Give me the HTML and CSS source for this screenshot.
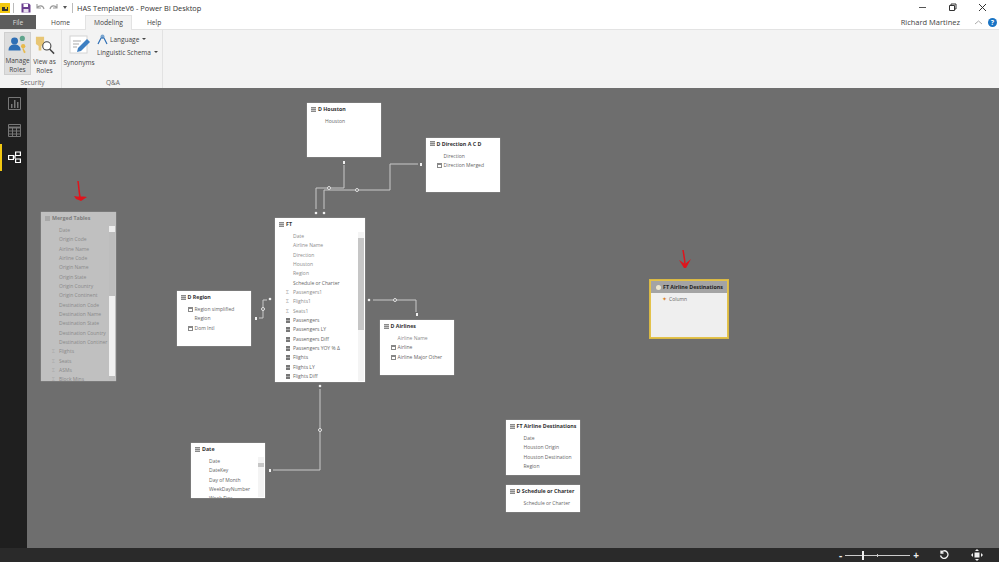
FILE: index.html
```html
<!DOCTYPE html>
<html lang="en">
<head>
    <meta charset="UTF-8">
    <title>HAS TemplateV6 - Power BI Desktop</title>
    <link rel="stylesheet" href="styles.css">
</head>
<body>
<div class="app">
    <div class="title-bar">
        <svg class="app-logo" viewBox="0 0 10 10"><rect width="10" height="10" fill="#f2c811"/><rect x="2" y="4" width="6" height="4" fill="#333"/><rect x="5" y="3" width="2" height="3" fill="#f2c811"/></svg>
        <span class="qa-sep"></span>
        <svg class="qa-icon qa-save" viewBox="0 0 10 10"><path d="M.5.5h7.500l1.500 1.500v7.500h-9z" fill="#6a3d8f"/><rect x="2.500" y="1" width="4.500" height="3" fill="#fff"/><rect x="2.500" y="6" width="5" height="3.500" fill="#e8e0ee"/></svg>
        <svg class="qa-icon" viewBox="0 0 10 10"><path d="M2 1v4h4M2 5c2-3 6-3 7 1" fill="none" stroke="#9a9a9a" stroke-width="1.100"/></svg>
        <svg class="qa-icon" viewBox="0 0 10 10"><path d="M8 1v4h-4M8 5c-2-3-6-3-7 1" fill="none" stroke="#9a9a9a" stroke-width="1.100"/></svg>
        <span class="qa-drop"></span>
        <span class="qa-sep"></span>
        <span class="window-title">HAS TemplateV6 - Power BI Desktop</span>
        <div class="window-controls">
            <svg viewBox="0 0 9 9"><path d="M1 4.500h7" stroke="#555" fill="none"/></svg>
            <svg viewBox="0 0 9 9"><path d="M1.500 2.500h5v5h-5zM3 2.500v-1.500h5v5h-1.500" stroke="#333" fill="none"/></svg>
            <svg viewBox="0 0 9 9"><path d="M1 1l7 7M8 1l-7 7" stroke="#333" fill="none"/></svg>
        </div>
    </div>

    <div class="tab-bar">
        <div class="tab tab-file">File</div>
        <div class="tab">Home</div>
        <div class="tab tab-active">Modeling</div>
        <div class="tab">Help</div>
        <div class="user-area">
            <span class="user-name">Richard Martinez</span>
            <svg class="collapse" viewBox="0 0 9 5"><path d="M1 4l3.500-3 3.500 3" stroke="#aaa" fill="none"/></svg>
            <span class="help-dot">?</span>
        </div>
    </div>

    <div class="ribbon">
        <div class="ribbon-group group-security">
            <div class="group-items">
                <div class="big-btn btn-selected">
                    <svg viewBox="0 0 24 22"><circle cx="8" cy="7" r="4" fill="#2f6fb5"/><path d="M1 18c0-5 3-7 7-7s7 2 7 7z" fill="#2f6fb5"/><circle cx="17" cy="4" r="3" fill="#5fa48c"/><circle cx="18" cy="13" r="2.500" fill="#e8b94a"/><path d="M18 15l3 5-2 1-2-5z" fill="#e8b94a"/></svg>
                    <span>Manage<br>Roles</span>
                </div>
                <div class="big-btn">
                    <svg viewBox="0 0 24 22"><path d="M2 2h9v8l-3 2v5h-3v-5l-3-2z" fill="#e8c675"/><circle cx="14" cy="12" r="4.500" fill="#fff" stroke="#444" stroke-width="1.200"/><path d="M17 15.500l5 5" stroke="#444" stroke-width="1.600"/></svg>
                    <span>View as<br>Roles</span>
                </div>
            </div>
            <div class="group-label">Security</div>
        </div>
        <div class="ribbon-group group-qa">
            <div class="group-items">
                <div class="big-btn btn-synonyms">
                    <svg viewBox="0 0 24 22"><rect x="3" y="2" width="17" height="17" fill="#fff" stroke="#d4d4d4"/><path d="M6 7h8M6 10h6M6 13h4" stroke="#a9a9a9"/><path d="M10 18l1-4 9-9 3 3-9 9z" fill="#3d7fc2"/></svg>
                    <span>Synonyms</span>
                </div>
                <div class="small-btns">
                    <div class="small-btn">
                        <svg viewBox="0 0 11 11"><circle cx="5.500" cy="2.500" r="2" fill="#7aa5cf"/><path d="M1 10l3-6h3l3 6" fill="none" stroke="#2f6fb5" stroke-width="1.200"/></svg>
                        <span>Language</span><i class="caret"></i>
                    </div>
                    <div class="small-btn">
                        <span>Linguistic Schema</span><i class="caret"></i>
                    </div>
                </div>
            </div>
            <div class="group-label">Q&amp;A</div>
        </div>
    </div>

    <div class="workspace">
        <div class="side-nav">
            <div class="nav-item">
                <svg viewBox="0 0 13 13"><path d="M.5.500h12v12h-12z" fill="none" stroke="#777"/><path d="M3 11V7h1.500v4zM6 11V3h1.500v8zM9 11V5h1.500v6z" fill="#777"/></svg>
            </div>
            <div class="nav-item">
                <svg viewBox="0 0 13 13"><path d="M.5.500h12v12h-12z" fill="none" stroke="#777"/><path d="M.5 3.500h12" stroke="#777" stroke-width="2"/><path d="M.5 7h12M.5 10h12M4.500 3v10M8.500 3v10" stroke="#777"/></svg>
            </div>
            <div class="nav-item nav-active">
                <svg viewBox="0 0 13 13"><g fill="#1f1f1f" stroke="#fff" stroke-width="1.200"><path d="M.6 4.500h4.800v4h-4.800z"/><path d="M7.600 1h4.800v3.500h-4.800z"/><path d="M7.600 8h4.800v3.500h-4.800z"/></g><path d="M5.500 6h2M7 4v4" stroke="#fff"/></svg>
            </div>
        </div>

        <div class="canvas">
            <svg class="links" viewBox="27 88 972 460">
                <g fill="none" stroke="#c8c8c8" stroke-width="1">
                    <path d="M344 165V188H316V209"/>
                    <path d="M418 164H390V190H324V209"/>
                    <path d="M259 318H263V300H267"/>
                    <path d="M373 300H416V312"/>
                    <path d="M320 389V470H273"/>
                </g>
                <g fill="#6e6e6e" stroke="#e4e4e4" stroke-width="1">
                    <circle cx="329" cy="188" r="1.500"/>
                    <circle cx="357" cy="190" r="1.500"/>
                    <circle cx="263" cy="309" r="1.500"/>
                    <circle cx="395" cy="300" r="1.500"/>
                    <circle cx="320" cy="430" r="1.500"/>
                </g>
                <g fill="#f0f0f0">
                    <rect x="343" y="161" width="2" height="3"/>
                    <rect x="420" y="163" width="2" height="3"/>
                    <rect x="255" y="317" width="2" height="3"/>
                    <rect x="416" y="313" width="2" height="3"/>
                    <rect x="269" y="469" width="2" height="3"/>
                    <circle cx="316" cy="213" r="1.300"/>
                    <circle cx="324" cy="213" r="1.300"/>
                    <circle cx="270" cy="299" r="1.300"/>
                    <circle cx="369" cy="300" r="1.300"/>
                    <circle cx="320" cy="386" r="1.300"/>
                </g>
                <g fill="none" stroke="#e0141c" stroke-width="1.500">
                    <path d="M78 181C79 188 79 192 80 197"/>
                    <path d="M683 250C684 256 685 260 685 266"/>
                </g>
                <g fill="#e0141c">
                    <path d="M74 196C78 197 83 196 87 197L81 201 76 199z"/>
                    <path d="M679 260L685 264 691 259 686 268H684z"/>
                </g>
            </svg>

            <div class="table t-houston">
                <div class="table-head"><i class="ic-table"></i>D Houston</div>
                <div class="row">Houston</div>
            </div>

            <div class="table t-direction">
                <div class="table-head"><i class="ic-table"></i>D Direction A C D</div>
                <div class="row">Direction</div>
                <div class="row"><i class="ic-calc"></i>Direction Merged</div>
            </div>

            <div class="table t-ft">
                <div class="table-head"><i class="ic-table"></i>FT</div>
                <div class="table-rows">
                    <div class="row dim">Date</div>
                    <div class="row dim">Airline Name</div>
                    <div class="row dim">Direction</div>
                    <div class="row dim">Houston</div>
                    <div class="row dim">Region</div>
                    <div class="row">Schedule or Charter</div>
                    <div class="row dim"><i class="ic-sum">Σ</i>Passengers1</div>
                    <div class="row dim"><i class="ic-sum">Σ</i>Flights1</div>
                    <div class="row dim"><i class="ic-sum">Σ</i>Seats1</div>
                    <div class="row"><i class="ic-measure"></i>Passengers</div>
                    <div class="row"><i class="ic-measure"></i>Passengers LY</div>
                    <div class="row"><i class="ic-measure"></i>Passengers Diff</div>
                    <div class="row"><i class="ic-measure"></i>Passengers YOY % Δ</div>
                    <div class="row"><i class="ic-measure"></i>Flights</div>
                    <div class="row"><i class="ic-measure"></i>Flights LY</div>
                    <div class="row"><i class="ic-measure"></i>Flights Diff</div>
                </div>
                <div class="scroll scroll-ft"><b></b></div>
            </div>

            <div class="table t-region">
                <div class="table-head"><i class="ic-table"></i>D Region</div>
                <div class="row"><i class="ic-calc"></i>Region simplified</div>
                <div class="row">Region</div>
                <div class="row"><i class="ic-calc"></i>Dom Intl</div>
            </div>

            <div class="table t-airlines">
                <div class="table-head"><i class="ic-table"></i>D Airlines</div>
                <div class="row dim">Airline Name</div>
                <div class="row"><i class="ic-calc"></i>Airline</div>
                <div class="row"><i class="ic-calc"></i>Airline Major Other</div>
            </div>

            <div class="table t-date">
                <div class="table-head"><i class="ic-table"></i>Date</div>
                <div class="table-rows">
                    <div class="row">Date</div>
                    <div class="row">DateKey</div>
                    <div class="row">Day of Month</div>
                    <div class="row">WeekDayNumber</div>
                    <div class="row">Week Day</div>
                </div>
                <div class="scroll scroll-date"><b></b></div>
            </div>

            <div class="table t-dest">
                <div class="table-head"><i class="ic-table"></i>FT Airline Destinations</div>
                <div class="row">Date</div>
                <div class="row">Houston Origin</div>
                <div class="row">Houston Destination</div>
                <div class="row">Region</div>
            </div>

            <div class="table t-schedule">
                <div class="table-head"><i class="ic-table"></i>D Schedule or Charter</div>
                <div class="row">Schedule or Charter</div>
            </div>

            <div class="table t-merged">
                <div class="table-head"><i class="ic-table"></i>Merged Tables</div>
                <div class="table-rows">
                    <div class="row">Date</div>
                    <div class="row">Origin Code</div>
                    <div class="row">Airline Name</div>
                    <div class="row">Airline Code</div>
                    <div class="row">Origin Name</div>
                    <div class="row">Origin State</div>
                    <div class="row">Origin Country</div>
                    <div class="row">Origin Continent</div>
                    <div class="row">Destination Code</div>
                    <div class="row">Destination Name</div>
                    <div class="row">Destination State</div>
                    <div class="row">Destination Country</div>
                    <div class="row">Destination Continer</div>
                    <div class="row"><i class="ic-sum">Σ</i>Flights</div>
                    <div class="row"><i class="ic-sum">Σ</i>Seats</div>
                    <div class="row"><i class="ic-sum">Σ</i>ASMs</div>
                    <div class="row"><i class="ic-sum">Σ</i>Block Mins</div>
                </div>
                <div class="scroll scroll-merged"><b></b></div>
            </div>

            <div class="table t-new">
                <div class="table-head"><i class="ic-new"></i>FT Airline Destinations</div>
                <div class="row"><i class="ic-star">✦</i>Column</div>
            </div>
        </div>
    </div>

    <div class="status-bar">
        <div class="zoom-control">
            <span class="zoom-sign">-</span>
            <div class="zoom-track"><b></b><i></i></div>
            <span class="zoom-sign">+</span>
        </div>
        <svg class="status-icon" viewBox="0 0 10 10"><path d="M2 2.500a3.800 3.800 0 1 1-.5 3M2 .5v2.500h2.500" fill="none" stroke="#f2f2f2" stroke-width="1.300"/></svg>
        <svg class="status-icon fit" viewBox="0 0 12 12"><path d="M6 0l2 2H4zM6 12l2-2H4zM0 6l2-2v4zM12 6l-2-2v4z" fill="#f2f2f2"/><rect x="3.500" y="3.500" width="5" height="5" fill="#f2f2f2"/></svg>
    </div>
</div>
</body>
</html>
```

FILE: styles.css
```css
* {
    margin: 0;
    padding: 0;
    box-sizing: border-box;
}

body {
    font-family: 'Open Sans', 'Liberation Sans', sans-serif;
    background: #6e6e6e;
    overflow: hidden;
}

.app {
    width: 999px;
    height: 562px;
    display: flex;
    flex-direction: column;
}

/* title bar */
.title-bar {
    height: 15px;
    background: #fff;
    display: flex;
    align-items: center;
    flex-shrink: 0;
}

.app-logo {
    width: 10px;
    height: 10px;
}

.qa-sep {
    width: 1px;
    height: 10px;
    background: #bbb;
    margin: 0 4px 0 3px;
}

.qa-icon {
    width: 10px;
    height: 10px;
    margin: 0 2px;
}

.qa-save {
    margin-left: 3px;
}

.qa-drop {
    width: 0;
    height: 0;
    border-left: 2px solid transparent;
    border-right: 2px solid transparent;
    border-top: 3px solid #555;
    margin: 0 2px;
}

.window-title {
    font-size: 7.400px;
    color: #333;
    white-space: nowrap;
}

.window-controls {
    margin-left: auto;
    display: flex;
    gap: 21px;
    padding-right: 12px;
}

.window-controls svg {
    width: 9px;
    height: 9px;
}

/* tabs */
.tab-bar {
    height: 15px;
    background: #fff;
    display: flex;
    align-items: stretch;
    border-bottom: 1px solid #e3e3e3;
    flex-shrink: 0;
}

.tab {
    font-size: 6.700px;
    color: #444;
    padding: 0 15px;
    line-height: 15px;
    white-space: nowrap;
}

.tab-file {
    width: 36px;
    background: #5c5c5c;
    color: #ddd;
    padding: 0;
    text-align: center;
}

.tab-active {
    background: #f3f3f3;
    border: 1px solid #e3e3e3;
    border-bottom: none;
    height: 15px;
    line-height: 14px;
    width: 47px;
    padding: 0;
    text-align: center;
}

.user-area {
    margin-left: auto;
    display: flex;
    align-items: center;
    padding-right: 2px;
}

.user-name {
    font-size: 7.500px;
    color: #444;
    margin-right: 14px;
}

.collapse {
    width: 9px;
    height: 5px;
    margin-right: 5px;
}

.help-dot {
    width: 9px;
    height: 9px;
    border-radius: 50%;
    background: #1a74c4;
    color: #fff;
    font-size: 7px;
    font-weight: 700;
    line-height: 9px;
    text-align: center;
}

/* ribbon */
.ribbon {
    height: 58px;
    background: #f3f3f3;
    display: flex;
    flex-shrink: 0;
}

.ribbon-group {
    display: flex;
    flex-direction: column;
    border-right: 1px solid #e2e2e2;
}

.group-security {
    width: 62px;
    padding-left: 4px;
}

.group-qa {
    width: 101px;
    padding-left: 2px;
}

.group-items {
    height: 49px;
    padding-top: 2px;
    display: flex;
}

.group-label {
    font-size: 6.500px;
    color: #666;
    text-align: center;
    line-height: 8px;
}

.big-btn {
    width: 27px;
    height: 43px;
    display: flex;
    flex-direction: column;
    align-items: center;
    font-size: 6.500px;
    line-height: 9px;
    color: #444;
    text-align: center;
    padding-top: 3px;
}

.big-btn svg {
    width: 24px;
    height: 22px;
    margin-bottom: 2px;
}

.btn-selected {
    background: #dedede;
    border: 1px solid #cfcfcf;
    padding-top: 2px;
}

.btn-synonyms {
    width: 30px;
    margin-right: 3px;
    padding-top: 2px;
}

.small-btns {
    display: flex;
    flex-direction: column;
    gap: 3px;
    padding-top: 2px;
}

.small-btn {
    display: flex;
    align-items: center;
    font-size: 6.500px;
    color: #444;
    height: 10px;
    white-space: nowrap;
}

.small-btn svg {
    width: 11px;
    height: 11px;
    margin-right: 2px;
}

.caret {
    width: 0;
    height: 0;
    border-left: 2px solid transparent;
    border-right: 2px solid transparent;
    border-top: 2px solid #444;
    margin-left: 3px;
}

/* main area */
.workspace {
    flex: 1;
    display: flex;
    min-height: 0;
}

.side-nav {
    width: 27px;
    background: #1f1f1f;
    padding-top: 2px;
    display: flex;
    flex-direction: column;
    flex-shrink: 0;
}

.nav-item {
    height: 27px;
    display: flex;
    align-items: center;
    justify-content: center;
    border-left: 2px solid transparent;
}

.nav-item svg {
    width: 13px;
    height: 13px;
}

.nav-active {
    border-left-color: #f2c811;
}

.canvas {
    flex: 1;
    position: relative;
    background: #6e6e6e;
    overflow: hidden;
}

.links {
    position: absolute;
    left: 0;
    top: 0;
    width: 972px;
    height: 460px;
}

/* diagram tables */
.table {
    position: absolute;
    background: #fff;
    box-shadow: 0 0 1px rgba(255,255,255,0.5);
    overflow: hidden;
    font-size: 5px;
    color: #666;
}

.table-head {
    height: 12px;
    margin-bottom: 2px;
    display: flex;
    align-items: center;
    padding-left: 4px;
    font-size: 5.300px;
    font-weight: 700;
    color: #333;
    white-space: nowrap;
}

.ic-table {
    width: 5px;
    height: 5px;
    background: repeating-linear-gradient(#8a8a8a 0 1px, #c4c4c4 1px 2px);
    margin-right: 2px;
    flex-shrink: 0;
}

.row {
    height: 9.330px;
    line-height: 9.330px;
    padding-left: 18px;
    position: relative;
    white-space: nowrap;
}

.dim {
    color: #8c8c8c;
}

.ic-calc,
.ic-measure,
.ic-sum {
    position: absolute;
    left: 11px;
    top: 2px;
    width: 5px;
    height: 5px;
    font-style: normal;
}

.ic-calc {
    border: 1px solid #888;
    background: linear-gradient(#888 0 1px, #fff 1px);
}

.ic-measure {
    background: repeating-linear-gradient(#777 0 2px, #aaa 2px 3px);
    width: 4px;
}

.ic-sum {
    top: 0;
    color: #aaa;
    font-size: 5px;
}

.table-rows {
    overflow: hidden;
}

.scroll {
    position: absolute;
    right: 1px;
    width: 6px;
    background: #f4f4f4;
}

.scroll b {
    display: block;
    background: #c6c6c6;
}

.t-houston {
    left: 280px;
    top: 15px;
    width: 74px;
    height: 54px;
}

.t-direction {
    left: 398.500px;
    top: 49.500px;
    width: 74.500px;
    height: 54.500px;
}

.t-ft {
    left: 248px;
    top: 130px;
    width: 90px;
    height: 164px;
}

.scroll-ft {
    top: 14px;
    bottom: 1px;
}

.scroll-ft b {
    height: 92px;
    margin-top: 6px;
}

.t-region {
    left: 149.500px;
    top: 203px;
    width: 74.500px;
    height: 55px;
}

.t-airlines {
    left: 352.500px;
    top: 232px;
    width: 74.500px;
    height: 55px;
}

.t-date {
    left: 164px;
    top: 355px;
    width: 74px;
    height: 55px;
}

.t-date .table-rows {
    height: 41px;
}

.scroll-date {
    top: 14px;
    bottom: 1px;
}

.scroll-date b {
    height: 4px;
    margin-top: 6px;
}

.t-dest {
    left: 478.500px;
    top: 332px;
    width: 74.500px;
    height: 55px;
}

.t-schedule {
    left: 478.500px;
    top: 397px;
    width: 74.500px;
    height: 27px;
}

/* dimmed while a new table is being dragged */
.t-merged {
    left: 14px;
    top: 124px;
    width: 74.500px;
    height: 169px;
    background: #c0c0c0;
    color: #8a8a8a;
}

.t-merged .table-head {
    color: #7c7c7c;
}

.t-merged .ic-table {
    background: #a8a8a8;
}

.t-merged .table-rows {
    height: 155px;
}

.scroll-merged {
    top: 14px;
    bottom: 1px;
    background: #bdbdbd;
}

.scroll-merged::before {
    content: '';
    display: block;
    height: 6px;
    background: #eee;
}

.scroll-merged b {
    height: 80px;
    margin-top: 64px;
    background: #f0f0f0;
}

.t-new {
    left: 623px;
    top: 192px;
    width: 78px;
    height: 58px;
    background: #efefef;
    border: 1px solid #e3c24b;
    box-shadow: 0 0 0 1px #d9b945;
}

.t-new .table-head {
    background: #a4a4a4;
    color: #222;
    height: 12px;
    padding-left: 5px;
}

.ic-new {
    width: 5px;
    height: 5px;
    border-radius: 50%;
    background: #ece6cf;
    margin-right: 2px;
}

.t-new .row {
    padding-left: 18px;
    margin-top: 1px;
}

.ic-star {
    position: absolute;
    left: 11px;
    top: 0;
    font-style: normal;
    color: #d9832b;
    font-size: 6px;
}

/* status bar */
.status-bar {
    height: 14px;
    background: #2a2a2a;
    display: flex;
    align-items: center;
    justify-content: flex-end;
    flex-shrink: 0;
    padding-right: 16px;
}

.zoom-control {
    display: flex;
    align-items: center;
    gap: 3px;
    margin-right: 20px;
}

.zoom-sign {
    color: #eee;
    font-size: 10px;
    font-weight: 700;
    line-height: 10px;
}

.zoom-track {
    width: 65px;
    height: 1px;
    background: #ccc;
    position: relative;
}

.zoom-track b {
    position: absolute;
    left: 17px;
    top: -4px;
    width: 2px;
    height: 9px;
    background: #eee;
}

.zoom-track i {
    position: absolute;
    left: 32px;
    top: -1px;
    width: 1px;
    height: 3px;
    background: #ccc;
}

.status-icon {
    width: 10px;
    height: 10px;
    margin-right: 22px;
}

.status-icon.fit {
    width: 12px;
    height: 12px;
    margin-right: 0;
}
```
